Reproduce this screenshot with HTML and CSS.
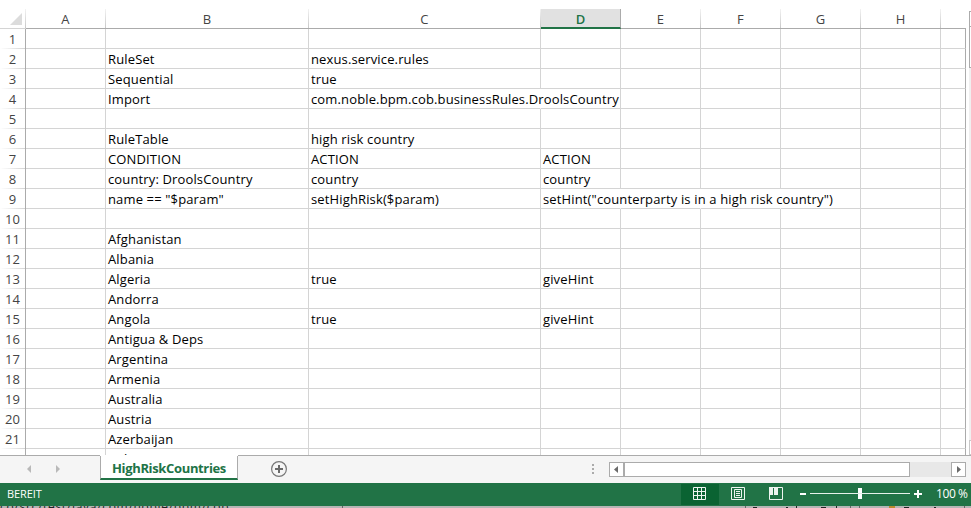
FILE: index.html
```html
<!DOCTYPE html>
<html lang="de">
<head>
<meta charset="utf-8">
<title>HighRiskCountries</title>
<link rel="stylesheet" href="styles.css">
</head>
<body>
<div class="app">
  <div class="workspace">
    <div class="sheet" id="sheet"></div>
    <div class="vscroll"><i class="vup"></i><i class="vthumb"></i><i class="vtrack"></i><i class="vdown"></i></div>
  </div>
  <div class="tabbar">
    <svg class="tabnav" width="100" height="27" viewBox="0 0 100 27"><path d="M31 9v8l-4-4zM56 9v8l4-4z" fill="#b9b9b9"/></svg>
    <div class="tab"><span>HighRiskCountries</span></div>
    <svg class="add" width="18" height="18" viewBox="0 0 18 18"><circle cx="9" cy="9" r="7.4" fill="none" stroke="#777" stroke-width="1.2"/><path d="M9 5v8M5 9h8" stroke="#6a6a6a" stroke-width="2"/></svg>
    <svg class="grip" width="2" height="10" viewBox="0 0 2 10"><path d="M0 0h2v2H0zM0 4h2v2H0zM0 8h2v2H0z" fill="#ababab"/></svg>
    <div class="hscroll">
      <div class="arrow"><svg width="13" height="13" viewBox="0 0 13 13"><path d="M8 3v7L4 6.500z" fill="#6a6a6a"/></svg></div>
      <div class="thumb"></div>
      <div class="track"></div>
      <div class="arrow"><svg width="13" height="13" viewBox="0 0 13 13"><path d="M5 3v7l4-3.500z" fill="#6a6a6a"/></svg></div>
    </div>
  </div>
  <div class="status">
    <span class="ready">BEREIT</span>
    <div class="view active"><svg width="13" height="13" viewBox="0 0 13 13"><path d="M.5.500h12v12H.5zM4.500 0v13M8.500 0v13M0 4.500h13M0 8.500h13" fill="none" stroke="#eef5f0"/></svg></div>
    <div class="view"><svg width="14" height="13" viewBox="0 0 14 13"><path d="M.5.500h13v12H.5zM3.500 2.500h7v8h-7zM5 4.500h4M5 6.500h4M5 8.500h4" fill="none" stroke="#eef5f0"/></svg></div>
    <div class="view"><svg width="14" height="13" viewBox="0 0 14 13"><path d="M.5.500h13v12H.5z" fill="none" stroke="#eef5f0"/><path d="M0 0h4v8H0zM5 0h4v8H5z" fill="#eef5f0"/></svg></div>
    <svg class="zoom" width="126" height="23" viewBox="0 0 126 23"><path d="M0 10h6v2H0zM114 10h8v2h-8zM117 7h2v8h-2zM58 5h4v11h-4z" fill="#fff"/><path d="M10 10.500h100" stroke="#e8f1eb"/></svg>
    <span class="percent">100 %</span>
  </div>
  <div class="below">
    <span>co/src/test/java/com/noble/bpm/cob</span>
    <svg width="629" height="2" viewBox="0 0 629 2"><path d="M0 0h1v2H0zM403 0h1v2h-1zM508 0h1v2h-1zM517 0h1v2h-1zM622 0h1v2h-1z" fill="#666"/><path d="M411 1h4v1h-4zM444 1h2v1h-2zM454 0h1v2h-1zM479 1h5v1h-5zM494 0h1v2h-1zM562 1h5v1h-5zM592 1h2v1h-2z" fill="#222"/><path d="M547 0h6v2h-6z" fill="#b98a2c"/></svg>
  </div>
</div>
<script src="script.js"></script>
</body>
</html>
```
FILE: styles.css
```css
* { box-sizing: border-box; }
body { margin: 0; background: #fff; font-family: "Open Sans", "Noto Sans", sans-serif; }
svg { display: block; flex: none; }
.app { width: 971px; height: 508px; display: flex; flex-direction: column; overflow: hidden; }
.workspace { height: 456px; padding-top: 9px; display: flex; border-bottom: 1px solid #ababab; }
.sheet { width: 966px; height: 446px; overflow: hidden; }
.row { display: grid; grid-template-columns: 26px 80px 203px 232px repeat(5, 80px) 25px; height: 20px; }
.cell { border-right: 1px solid #d4d4d4; border-bottom: 1px solid #d4d4d4; padding-left: 2px; font-size: 13px; line-height: 21px; letter-spacing: .14px; height: 20px; color: #000; white-space: nowrap; }
.cell.spill { border-right-color: transparent; }
.cell:last-child { border-right-color: #ababab; }
.cell.num { border-right-color: #ababab; padding: 0; text-align: center; color: #444; border-bottom: 0; background: linear-gradient(90deg, #fff, #d4d4d4) left bottom / 100% 1px no-repeat; }
.head .cell { padding: 0 1px 0 0; text-align: center; color: #444; border-bottom-color: #ababab; border-right: 0; background: linear-gradient(#f2f2f2, #c8c8c8) right top / 1px 100% no-repeat; }
.head .cell:last-child { background: none; }
.head .cell.selected { padding: 0; background: #e1e1e1; color: #217346; font-weight: 600; border-bottom: 2px solid #217346; border-right: 1px solid #ababab; }
.head .corner { display: flex; justify-content: flex-end; padding: 4px 4px 0 0; border-bottom-color: #d4d4d4; }
.vscroll { width: 5px; padding-left: 3px; display: flex; flex-direction: column; }
.vscroll i { display: block; border-left: 1px solid #ababab; }
.vup { height: 16px; margin-top: 2px; border-top: 1px solid #ababab; border-bottom: 1px solid #ababab; }
.vthumb { height: 41px; border-bottom: 1px solid #ababab; }
.vscroll .vtrack { flex: 1; border: 0; background: #f0f0f0; }
.vscroll .vdown { height: 15px; border: 1px solid #c8c8c8; border-right: 0; }
.tabbar { height: 27px; background: #f5f5f5; display: flex; align-items: flex-start; }
.tab { width: 138px; height: 24px; background: #fff; border: solid #ababab; border-width: 0 1px; border-bottom: 2px solid #217346; box-shadow: 0 -1px #fff; text-align: center; color: #217346; font-size: 13px; font-weight: 700; line-height: 25px; letter-spacing: -.35px; white-space: nowrap; }
.add { margin: 4px 0 0 32px; }
.grip { margin: 8px 0 0 304px; }
.hscroll { width: 357px; height: 15px; margin: 6px 0 0 15px; display: flex; background: #e8e8e8; }
.arrow { width: 15px; height: 15px; background: #fff; border: 1px solid #ababab; }
.thumb { width: 286px; background: #fff; border: 1px solid #ababab; }
.track { flex: 1; }
.status { height: 23px; background: #217346; display: flex; color: #fff; }
.ready { width: 681px; padding-left: 7px; font-size: 11px; line-height: 22px; letter-spacing: -.1px; }
.view { width: 38px; height: 21px; margin-top: 1px; display: flex; justify-content: center; padding-top: 3px; }
.view.active { background: #0a6332; padding-right: 1px; }
.zoom { margin-left: 5px; }
.percent { margin-left: 10px; font-size: 12px; line-height: 22px; letter-spacing: -.4px; white-space: nowrap; }
.below { height: 2px; background: #b5b5b5; overflow: hidden; display: flex; }
.below span { width: 342px; font-size: 12px; line-height: 2px; letter-spacing: .7px; color: #222; white-space: nowrap; }
```
FILE: script.js
```js
const sheet = document.getElementById('sheet');

const rows = {
  2: { B: 'RuleSet', C: 'nexus.service.rules' },
  3: { B: 'Sequential', C: 'true' },
  4: { B: 'Import', C: 'com.noble.bpm.cob.businessRules.DroolsCountry' },
  6: { B: 'RuleTable', C: 'high risk country' },
  7: { B: 'CONDITION', C: 'ACTION', D: 'ACTION' },
  8: { B: 'country: DroolsCountry', C: 'country', D: 'country' },
  9: { B: 'name == "$param"', C: 'setHighRisk($param)', D: 'setHint("counterparty is in a high risk country")' },
  11: { B: 'Afghanistan' },
  12: { B: 'Albania' },
  13: { B: 'Algeria', C: 'true', D: 'giveHint' },
  14: { B: 'Andorra' },
  15: { B: 'Angola', C: 'true', D: 'giveHint' },
  16: { B: 'Antigua & Deps' },
  17: { B: 'Argentina' },
  18: { B: 'Armenia' },
  19: { B: 'Australia' },
  20: { B: 'Austria' },
  21: { B: 'Azerbaijan' },
  22: { B: 'Bahamas' }
};
// Cells whose right gridline is covered by overflowing text
const spills = { 4: 'C', 9: 'DEF' };
const columns = [...'ABCDEFGH', ''];

function add(row, text, cls) {
  const cell = document.createElement('div');
  cell.className = 'cell ' + cls;
  cell.textContent = text;
  row.append(cell);
  return cell;
}

function addRow(cls) {
  const row = document.createElement('div');
  row.className = 'row ' + cls;
  sheet.append(row);
  return row;
}

const head = addRow('head');
add(head, '', 'corner').innerHTML = '<svg width="12" height="12" viewBox="0 0 12 12"><path d="M12 0v12H0z" fill="#dcdcdc"/></svg>';
columns.forEach(c => add(head, c, c === 'D' ? 'selected' : ''));

for (let n = 1; n <= 22; n++) {
  const row = addRow('');
  add(row, n, 'num');
  columns.forEach(c => add(row, (rows[n] || {})[c] || '', c && (spills[n] || '').includes(c) ? 'spill' : ''));
}
```
